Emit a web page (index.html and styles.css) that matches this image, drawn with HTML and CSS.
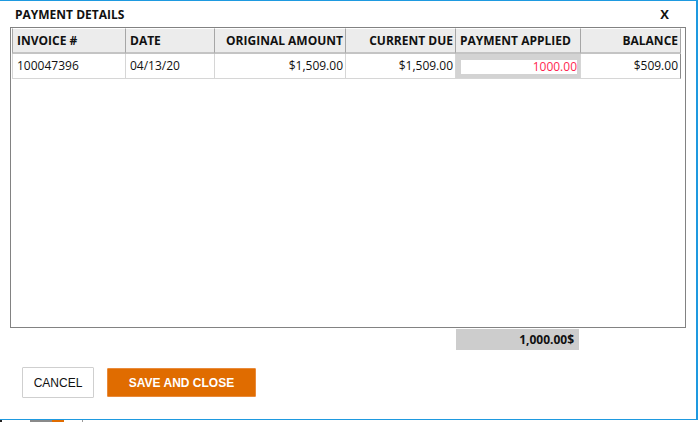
FILE: index.html
```html
<!DOCTYPE html>
<html>
<head>
    <meta charset="UTF-8">
    <title>Payment Details</title>
    <link rel="stylesheet" href="styles.css">
</head>
<body>
    <div class="dialog">
        <div class="dialog-head">
            <span class="title">PAYMENT DETAILS</span>
            <span class="close">X</span>
        </div>
        <div class="grid">
            <div class="grid-row grid-header">
                <div class="cell">INVOICE #</div>
                <div class="cell">DATE</div>
                <div class="cell right">ORIGINAL AMOUNT</div>
                <div class="cell right">CURRENT DUE</div>
                <div class="cell">PAYMENT APPLIED</div>
                <div class="cell right">BALANCE</div>
            </div>
            <div class="grid-row grid-data">
                <div class="cell">100047396</div>
                <div class="cell">04/13/20</div>
                <div class="cell right">$1,509.00</div>
                <div class="cell right">$1,509.00</div>
                <div class="cell cell-edit"><div class="edit-box">1000.00</div></div>
                <div class="cell right cell-last">$509.00</div>
            </div>
        </div>
        <div class="total">1,000.00$</div>
        <div class="actions">
            <button class="btn btn-cancel">CANCEL</button>
            <button class="btn btn-save">SAVE AND CLOSE</button>
        </div>
    </div>
    <div class="taskbar">
        <span class="tb-dark"></span>
        <span class="tb-gray"></span>
        <span class="tb-orange"></span>
        <span class="tb-line"></span>
    </div>
</body>
</html>
```

FILE: styles.css
```css
body {
    margin: 0;
    background-color: #fff;
    font-family: "Open Sans", "Noto Sans", sans-serif;
    color: #111;
}
.dialog {
    box-sizing: border-box;
    width: 698px;
    height: 420px;
    border-top: 1px solid #1e9ae0;
    border-right: 2px solid #1e9ae0;
    border-bottom: 1px solid #1e9ae0;
    background-color: #fff;
}
.dialog-head {
    height: 26px;
    display: flex;
    align-items: center;
    justify-content: space-between;
    padding: 0 27px 0 15px;
    font-size: 12px;
    font-weight: bold;
}
.close {
    font-size: 13px;
}
.grid {
    box-sizing: border-box;
    width: 676px;
    height: 301px;
    margin-left: 10px;
    border: 1px solid #828282;
}
.grid-row {
    display: grid;
    grid-template-columns: 114px 89px 131px 110px 125px 100px;
    margin-left: 1px;
}
.cell {
    box-sizing: border-box;
    padding: 0 2px 0 4px;
    font-size: 12px;
    white-space: nowrap;
    overflow: hidden;
}
.right {
    text-align: right;
}
.grid-header .cell {
    height: 26px;
    line-height: 24px;
    font-weight: bold;
    background-color: #ececec;
    border-top: 1px solid #fff;
    border-right: 1px solid #a6a6a6;
    border-bottom: 2px solid #c4c4c4;
}
.grid-header .cell:first-child {
    border-left: 1px solid #a6a6a6;
}
.grid-data .cell {
    height: 25px;
    line-height: 24px;
    border-right: 1px solid #d6d6d6;
    border-bottom: 1px solid #d6d6d6;
}
.grid-data .cell:first-child {
    border-left: 1px solid #d6d6d6;
}
.grid-data .cell-last {
    border-right: 1px solid #8a8a8a;
}
.grid-data .cell-edit {
    padding: 6px 3px 4px 5px;
    background-color: #d3d3d3;
}
.edit-box {
    height: 14px;
    line-height: 14px;
    background-color: #fff;
    color: #ff1f4f;
    text-align: right;
}
.total {
    box-sizing: border-box;
    width: 123px;
    height: 21px;
    margin: 1px 0 0 456px;
    padding-right: 5px;
    background-color: #cdcdcd;
    font-size: 12px;
    font-weight: bold;
    line-height: 21px;
    text-align: right;
}
.actions {
    display: flex;
    align-items: center;
    gap: 13px;
    margin: 17px 0 0 22px;
}
.btn {
    box-sizing: border-box;
    font-family: "Liberation Sans", Arial, sans-serif;
    font-size: 12px;
    cursor: pointer;
    border-radius: 1px;
}
.btn-cancel {
    width: 72px;
    height: 31px;
    background-color: #fff;
    border: 1px solid #cfcfcf;
    color: #111;
}
.btn-save {
    width: 149px;
    height: 29px;
    background-color: #e06c00;
    border: 1px solid #e98a3a;
    color: #fff;
    font-weight: bold;
}
.taskbar {
    display: flex;
    height: 2px;
}
.taskbar span {
    display: block;
    height: 2px;
}
.tb-dark {
    width: 2px;
    background-color: #222;
    margin-right: 28px;
}
.tb-gray {
    width: 22px;
    background-color: #8a8a8a;
}
.tb-orange {
    width: 12px;
    background-color: #e06c00;
    margin-right: 18px;
}
.tb-line {
    width: 1px;
    background-color: #999;
}
```
